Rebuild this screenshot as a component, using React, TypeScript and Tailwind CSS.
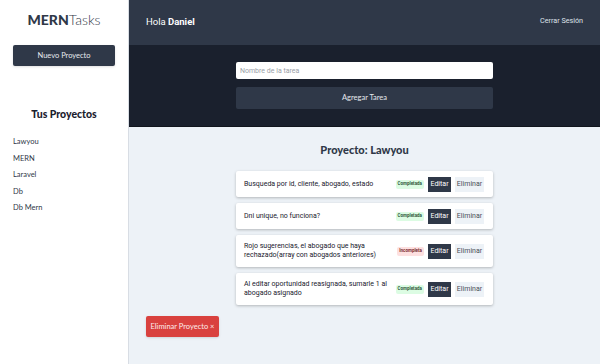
import React from 'react';

const proyectos = ['Lawyou', 'MERN', 'Laravel', 'Db', 'Db Mern'];

const tareas = [
  { id: 1, nombre: 'Busqueda por id, cliente, abogado, estado', estado: true },
  { id: 2, nombre: 'Dni unique, no funciona?', estado: true },
  { id: 3, nombre: 'Rojo sugerencias, el abogado que haya rechazado(array con abogados anteriores)', estado: false },
  { id: 4, nombre: 'Al editar oportunidad reasignada, sumarle 1 al abogado asignado', estado: true },
];

const App = () => {
  return (
    <div className="flex h-[364px] w-[600px] overflow-hidden font-['Lato',sans-serif]">
      {/* Sidebar */}
      <aside className="w-[129px] flex-shrink-0 bg-white border-r border-[#d8dde4] px-[13px]">
        <h1 className="mt-[11px] text-center text-[14px] leading-[18px] text-[#2f3848]">
          <span className="font-black">MERN</span>
          <span className="font-light">Tasks</span>
        </h1>
        <button className="mt-[16px] w-full h-[21px] rounded-[2px] bg-[#2f3848] text-[7.5px] text-[#e6e9ee] shadow-sm">
          Nuevo Proyecto
        </button>
        <h2 className="mt-[41px] text-center text-[10.5px] leading-[14px] font-black text-[#1a202d]">
          Tus Proyectos
        </h2>
        <ul className="mt-[16px] space-y-[6.5px]">
          {proyectos.map((p) => (
            <li key={p} className="text-[7.5px] leading-[10px] text-[#2f3848]">
              {p}
            </li>
          ))}
        </ul>
      </aside>

      {/* Main */}
      <main className="flex-1 flex flex-col bg-[#edf2f7] font-['Roboto',sans-serif]">
        <header className="h-[45px] bg-[#2f3848] flex items-center justify-between pl-[17px] pr-[17px]">
          <p className="text-[9.5px] text-white">
            Hola <span className="font-bold">Daniel</span>
          </p>
          <button className="text-[7.2px] text-[#dfe3ea] -mt-[3px]">Cerrar Sesión</button>
        </header>

        <div className="h-[82px] bg-[#1a202d] border-b border-[#11151d] pt-[17px]">
          <div className="w-[257px] mx-auto">
            <input
              type="text"
              placeholder="Nombre de la tarea"
              className="block w-full h-[17px] rounded-[2px] bg-white px-[4px] text-[7px] text-[#2f3848] placeholder-[#9aa0a8] outline-none"
            />
            <button className="mt-[8px] w-full h-[22px] rounded-[2px] bg-[#2f3848] text-[7.5px] text-[#e6e9ee] font-['Lato',sans-serif]">
              Agregar Tarea
            </button>
          </div>
        </div>

        <section className="flex-1 pt-[16px] px-[17px]">
          <h2 className="text-center text-[11px] leading-[13px] font-black text-[#2f3848] font-['Lato',sans-serif]">
            Proyecto: Lawyou
          </h2>
          <ul className="w-[257px] mx-auto mt-[15px] space-y-[6px]">
            {tareas.map((t) => (
              <li
                key={t.id}
                className={`flex items-center bg-white rounded-[2px] shadow-[0_1px_3px_rgba(0,0,0,0.25)] pl-[8px] pr-[9px] ${
                  t.id > 2 ? 'h-[32px]' : 'h-[26px]'
                }`}
              >
                <p className="flex-1 text-[7px] leading-[9px] text-[#1a202d] pr-[6px]">{t.nombre}</p>
                <span
                  className={`rounded-[2px] px-[2px] py-[1.5px] text-[4.5px] font-bold leading-[6px] ${
                    t.estado ? 'bg-[#dcfce3] text-[#2f5a3a]' : 'bg-[#fde0e0] text-[#7a2d2d]'
                  }`}
                >
                  {t.estado ? 'Completada' : 'Incompleta'}
                </span>
                <button className="ml-[4px] w-[23px] h-[15px] bg-[#2f3848] text-[7px] text-white">Editar</button>
                <button className="ml-[4px] w-[29px] h-[15px] bg-[#edf2f7] text-[7px] text-[#4b5058]">Eliminar</button>
              </li>
            ))}
          </ul>
          <button className="mt-[11px] w-[73px] h-[21px] rounded-[2px] bg-[#d9413e] text-[7.5px] text-[#fdeaea] font-['Lato',sans-serif] shadow-sm">
            Eliminar Proyecto &times;
          </button>
        </section>
      </main>
    </div>
  );
};

export default App;
